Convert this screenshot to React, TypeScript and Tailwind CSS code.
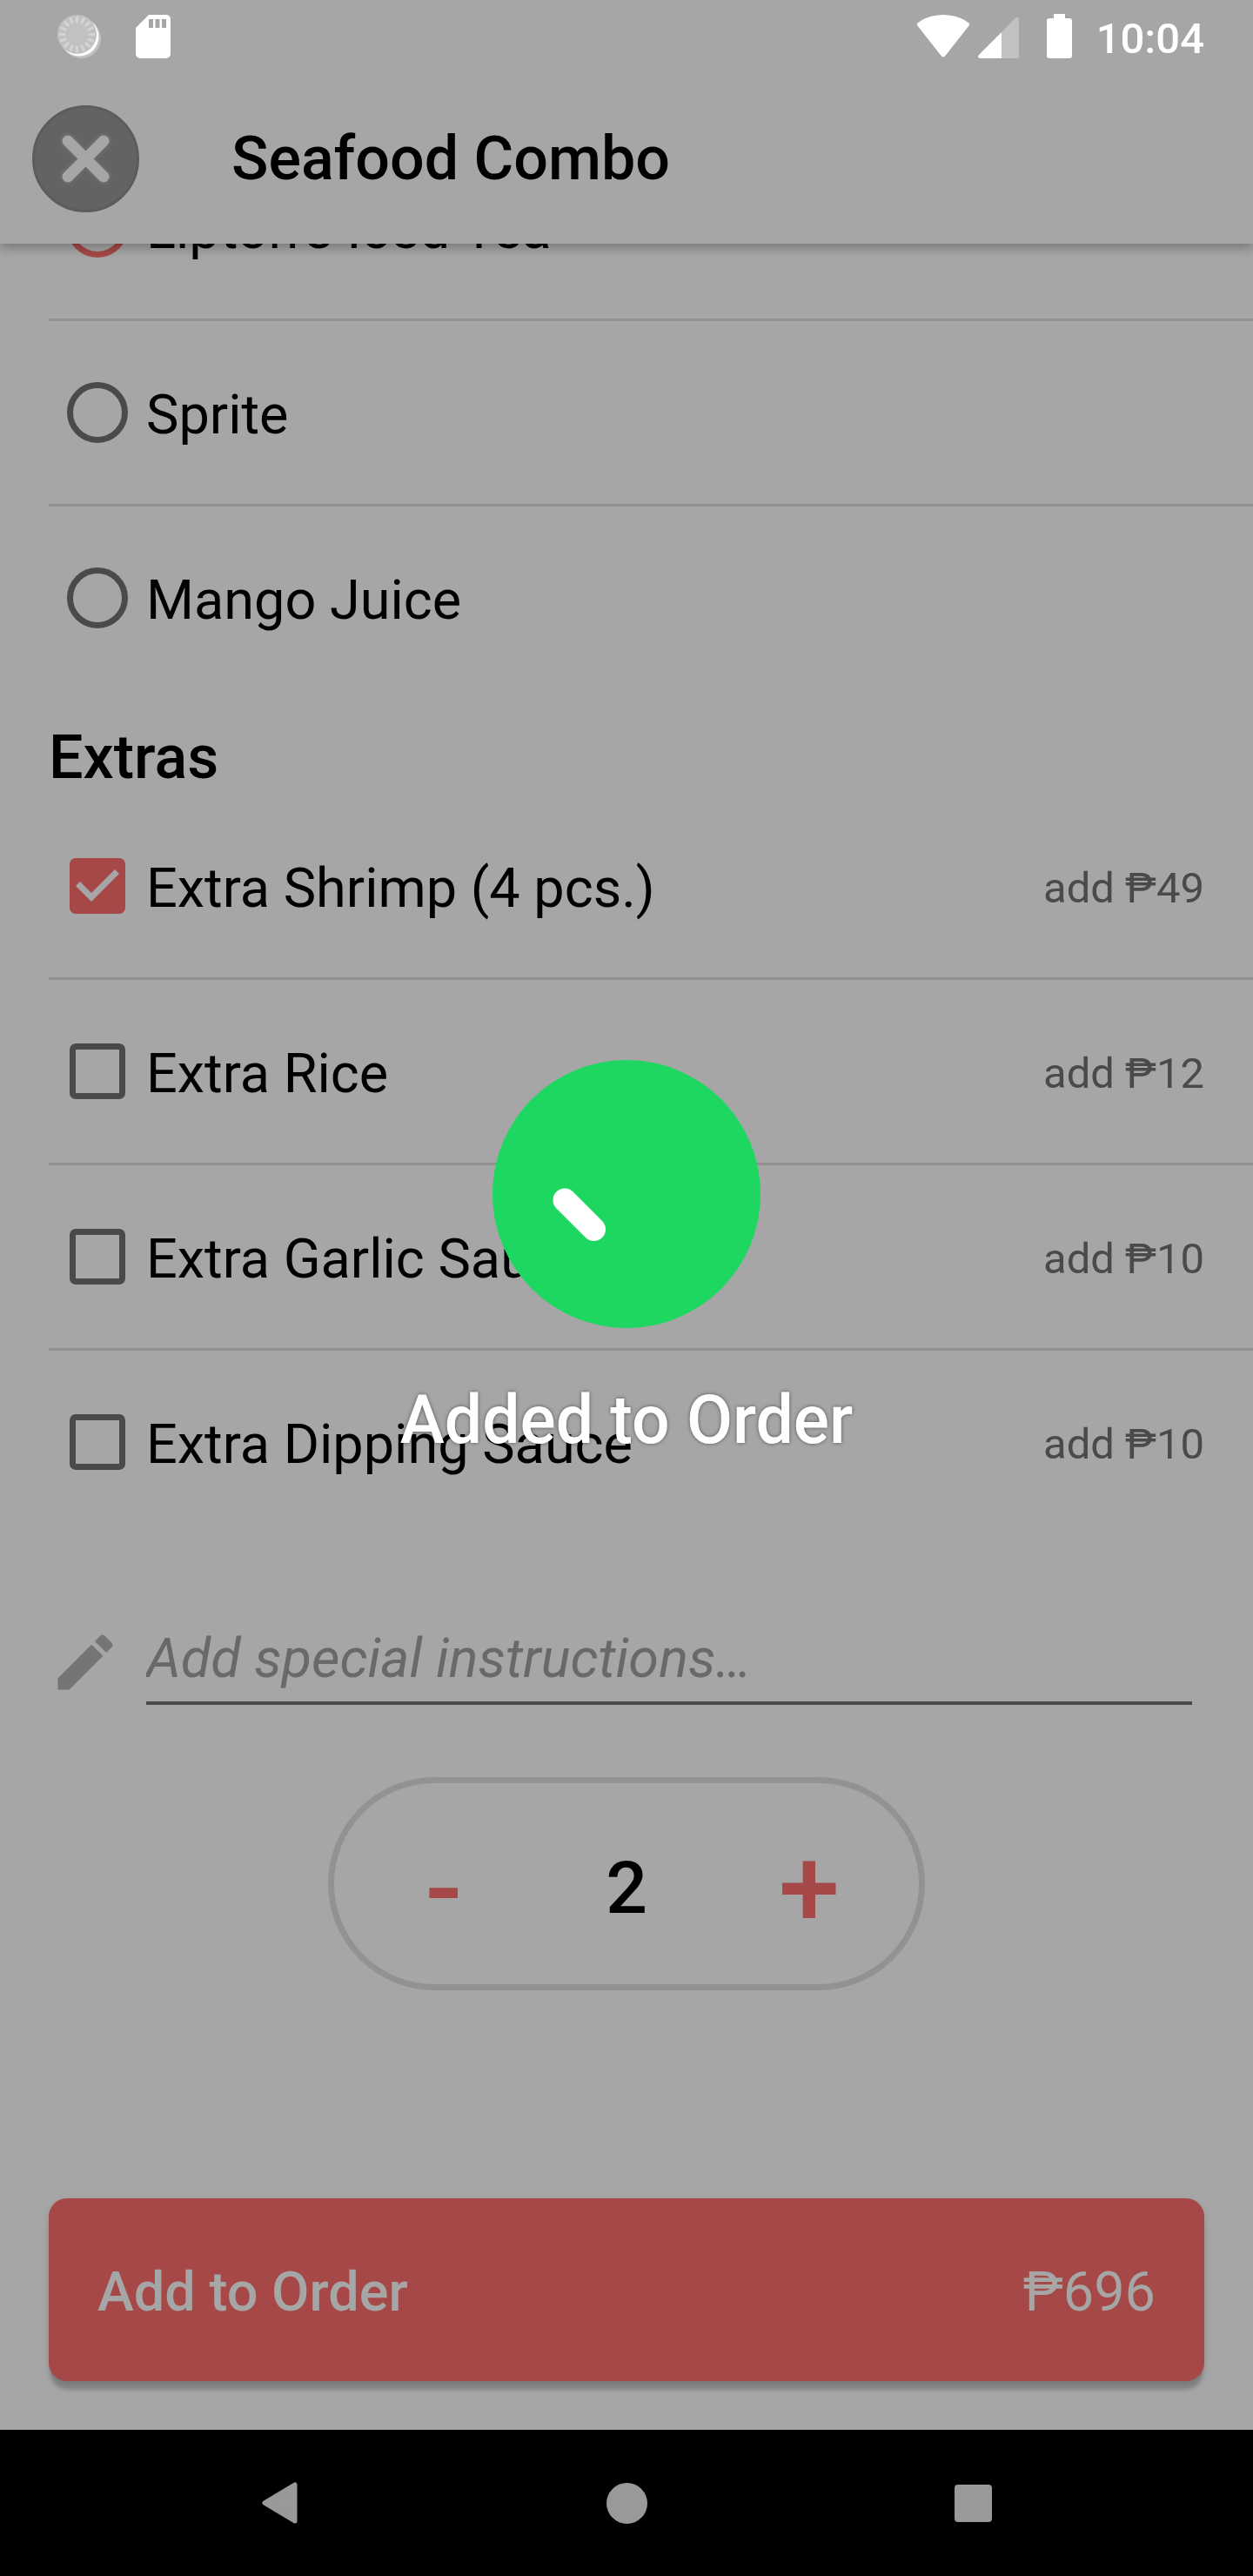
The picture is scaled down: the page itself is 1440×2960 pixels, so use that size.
import { useState } from "react";

const drinks = ["Lipton’s Iced Tea", "Sprite", "Mango Juice"];

const extras = [
  { name: "Extra Shrimp (4 pcs.)", price: 49 },
  { name: "Extra Rice", price: 12 },
  { name: "Extra Garlic Sauce", price: 10 },
  { name: "Extra Dipping Sauce", price: 10 },
];

const ticks = Array.from({ length: 16 }, (_, i) => i * 22.5);

function StatusBar() {
  return (
    <div className="flex h-[84px] items-center justify-between pl-[66px] pr-[56px] text-white">
      <div className="flex items-center gap-[40px]">
        <svg width="50" height="50" viewBox="0 0 50 50" aria-hidden="true">
          <circle cx="27.5" cy="27.5" r="22.5" fill="#c1c1c1" />
          <circle cx="25" cy="25" r="22.5" fill="#fff" />
          <circle cx="22.5" cy="22.5" r="22.5" fill="#c1c1c1" />
          {ticks.map((a) => (
            <path key={a} d="M22.5 3v5" stroke="#d4d4d4" strokeWidth="3" strokeLinecap="round" transform={`rotate(${a} 22.5 22.5)`} />
          ))}
        </svg>
        <svg width="40" height="50" viewBox="0 0 40 50" aria-hidden="true">
          <path fillRule="evenodd" fill="#fff" d="M15 0h20a5 5 0 0 1 5 5v40a5 5 0 0 1-5 5H5a5 5 0 0 1-5-5V15zM15 5v10h5V5zM22.500 5v10h5V5zM30 5v10h5V5z" />
        </svg>
      </div>
      <div className="flex items-center">
        <svg className="mr-[10px]" width="60" height="50" viewBox="0 0 60 50" aria-hidden="true">
          <path fill="#fff" d="M30 0C18.500 0 8.500 3.500.9 9.200a2.500 2.500 0 0 0-.3 3.600L28 47.500a2.500 2.500 0 0 0 4 0L59.400 12.800a2.500 2.500 0 0 0-.3-3.600C51.500 3.500 41.500 0 30 0z" />
        </svg>
        <svg className="mr-[32px]" width="47" height="50" viewBox="0 0 47 50" aria-hidden="true">
          <path fill="#c1c1c1" d="M27 20 42.500 4Q47 1 47 5.500V48a2 2 0 0 1-2 2H27z" />
          <path fill="#fff" d="M27 20V50H2.500Q-1.500 49 1 46z" />
        </svg>
        <svg className="mr-[28px]" width="29" height="52" viewBox="0 0 29 52" aria-hidden="true">
          <path fill="#fff" d="M8 0h13v5h5a3 3 0 0 1 3 3v40a3 3 0 0 1-3 3H3a3 3 0 0 1-3-3V8a3 3 0 0 1 3-3h5z" />
        </svg>
        <time className="pt-[4px] text-[49px] leading-[57px] font-medium">10:04</time>
      </div>
    </div>
  );
}

function Stepper({ value, onChange }: { value: number; onChange: (n: number) => void }) {
  return (
    <div className="mx-auto mt-[83px] flex h-[245px] w-[686px] items-center rounded-full border-[7px] border-[#929292]">
      <button
        type="button"
        aria-label="Decrease quantity"
        onClick={() => onChange(Math.max(1, value - 1))}
        className="flex-1 pt-[10px] text-[126px] leading-[148px] font-medium text-[#a64848]"
      >
        -
      </button>
      <output className="w-[168px] pt-[10px] text-center text-[84px] leading-[98px] font-medium">{value}</output>
      <button
        type="button"
        aria-label="Increase quantity"
        onClick={() => onChange(value + 1)}
        className="flex-1 pt-[10px] text-[126px] leading-[148px] font-medium text-[#a64848]"
      >
        +
      </button>
    </div>
  );
}

export default function App() {
  const [drink, setDrink] = useState(drinks[0]);
  const [picked, setPicked] = useState<string[]>([extras[0].name]);
  const [quantity, setQuantity] = useState(2);

  const toggle = (name: string) =>
    setPicked((p) => (p.includes(name) ? p.filter((n) => n !== name) : [...p, name]));

  return (
    <div className="relative flex min-h-screen flex-col bg-[#a6a6a6] font-['Roboto',sans-serif] text-black">
      <header className="relative z-10 bg-[#a6a6a6] shadow-[0_5px_12px_rgba(0,0,0,0.28)]">
        <StatusBar />
        <div className="flex h-[196px] items-center gap-[106px] pl-[37px]">
          <button type="button" aria-label="Close" className="size-[123px] rounded-full">
            <svg viewBox="0 0 123 123" className="size-full" aria-hidden="true">
              <circle cx="61.5" cy="61.5" r="60" fill="#636363" stroke="#5c5c5c" strokeWidth="3" />
              <path d="M41 41 82 82M82 41 41 82" stroke="#6a6a6a" strokeWidth="19" strokeLinecap="round" />
              <path d="M41 41 82 82M82 41 41 82" stroke="#a6a6a6" strokeWidth="13" strokeLinecap="round" />
            </svg>
          </button>
          <h1 className="text-[70px] leading-[82px] font-medium">Seafood Combo</h1>
        </div>
      </header>

      <main className="flex flex-1 flex-col overflow-hidden">
        <fieldset className="-mt-[124px] divide-y-3 divide-[#929292] pl-[56px]">
          {drinks.map((name) => (
            <label key={name} className="flex h-[213px] items-center pl-[21px] last:h-[210px]">
              <input
                type="radio"
                name="drink"
                checked={drink === name}
                onChange={() => setDrink(name)}
                className="mr-[21px] size-[70px] appearance-none rounded-full border-[7px] border-[#4a4a4a] checked:border-[#a64848]"
              />
              <span className="pt-[5px] text-[63px] leading-[74px]">{name}</span>
            </label>
          ))}
        </fieldset>

        <h2 className="mt-[35px] pl-[56px] text-[70px] leading-[86px] font-medium">Extras</h2>

        <div className="divide-y-3 divide-[#929292] pl-[56px]">
          {extras.map(({ name, price }) => (
            <label key={name} className="flex h-[213px] items-center pr-[56px] pl-[24px] last:h-[210px]">
              <span className="mr-[24px] grid size-[64px]">
                <input
                  type="checkbox"
                  checked={picked.includes(name)}
                  onChange={() => toggle(name)}
                  className="peer col-start-1 row-start-1 appearance-none rounded-[7px] border-[7px] border-[#4a4a4a] checked:border-[#a64848] checked:bg-[#a64848]"
                />
                <svg viewBox="0 0 64 64" className="pointer-events-none invisible col-start-1 row-start-1 peer-checked:visible" aria-hidden="true">
                  <path d="M9.500 29.500 25 45 54.500 15.500" fill="none" stroke="#a6a6a6" strokeWidth="7" />
                </svg>
              </span>
              <span className="flex-1 pt-[5px] text-[63px] leading-[74px]">{name}</span>
              <span className="pt-[4px] text-[49px] leading-[57px] text-[#4a4a4a]">add ₱{price}</span>
            </label>
          ))}
        </div>

        <div className="mt-[94px] flex items-center gap-[28px] pr-[70px] pl-[56px]">
          <svg className="mt-[4px] size-[84px] shrink-0" viewBox="0 0 24 24" fill="#757575" aria-hidden="true">
            <path d="M3 17.250V21h3.750L17.810 9.940l-3.750-3.750L3 17.250zM20.710 7.040c.39-.39.39-1.020 0-1.410l-2.340-2.340c-.39-.39-1.020-.39-1.410 0l-1.830 1.830 3.750 3.750 1.830-1.830z" />
          </svg>
          <input
            type="text"
            aria-label="Special instructions"
            placeholder="Add special instructions…"
            className="h-[103px] min-w-0 flex-1 border-b-4 border-[#4a4a4a] text-[63px] italic outline-none placeholder:text-[#696969]"
          />
        </div>

        <Stepper value={quantity} onChange={setQuantity} />

        <button
          type="button"
          className="mx-[56px] mt-auto mb-[56px] flex h-[210px] items-center justify-between rounded-[21px] bg-[#a64848] px-[56px] pt-[5px] text-[63px] leading-[74px] text-[#a6a6a6] shadow-[0_12px_4px_-2px_rgba(0,0,0,0.19),0_3px_8px_rgba(0,0,0,0.12)]"
        >
          <span className="font-medium">Add to Order</span>
          <span>₱696</span>
        </button>
      </main>

      <nav aria-label="System" className="flex h-[168px] justify-center bg-black">
        <button type="button" aria-label="Back" className="flex w-[398px] items-center justify-center">
          <svg width="42" height="48" viewBox="0 0 42 48" aria-hidden="true">
            <path d="M38 3v42L3 24z" fill="#999" stroke="#999" strokeWidth="5" strokeLinejoin="round" />
          </svg>
        </button>
        <button type="button" aria-label="Home" className="flex w-[398px] items-center justify-center">
          <span className="size-[47px] rounded-full bg-[#999]" />
        </button>
        <button type="button" aria-label="Recent apps" className="flex w-[398px] items-center justify-center">
          <span className="size-[43px] rounded-[4px] bg-[#999]" />
        </button>
      </nav>

      <div role="status" className="pointer-events-none absolute inset-0 z-20 flex flex-col items-center justify-center pb-[57px]">
        <svg width="308" height="308" viewBox="0 0 308 308" aria-hidden="true">
          <circle cx="154" cy="154" r="154" fill="#1ed760" />
          <path d="M83 161 116.500 194.500" stroke="#fff" strokeWidth="27" strokeLinecap="round" />
        </svg>
        <p className="mt-[54px] text-[77px] leading-[105px] font-medium text-white [text-shadow:0_0_4px_rgba(0,0,0,0.5)]">
          Added to Order
        </p>
      </div>
    </div>
  );
}
